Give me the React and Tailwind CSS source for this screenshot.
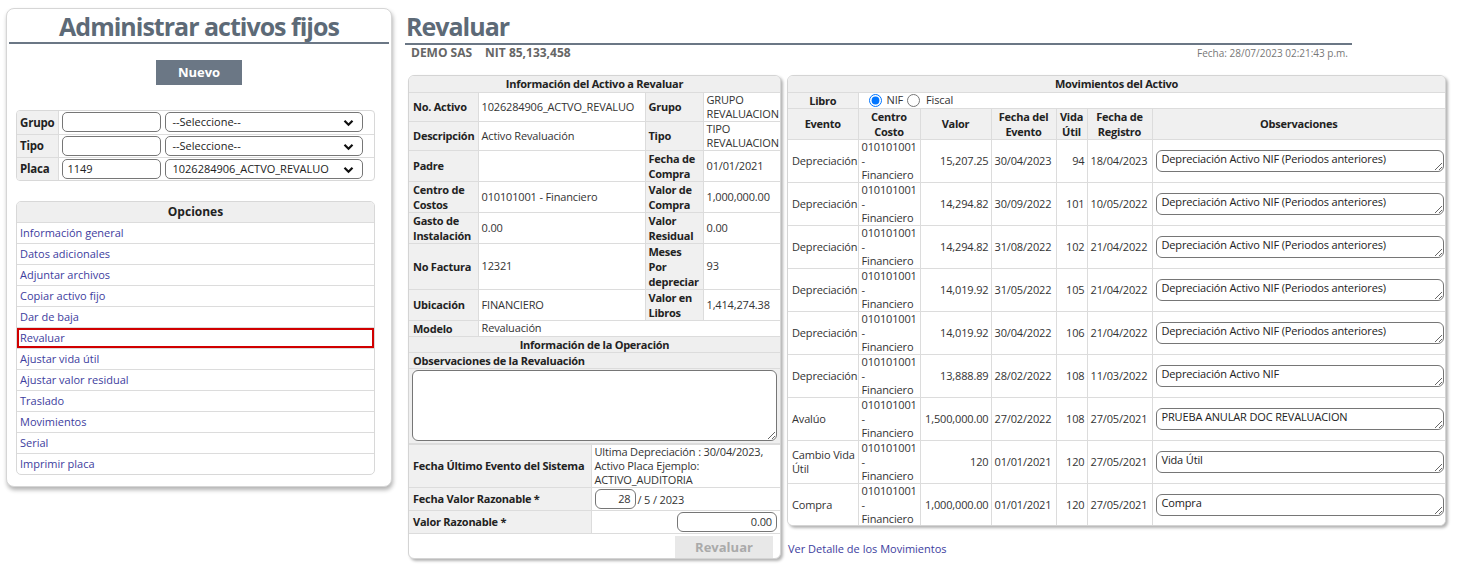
import React from 'react';

const opciones = [
  'Información general',
  'Datos adicionales',
  'Adjuntar archivos',
  'Copiar activo fijo',
  'Dar de baja',
  'Revaluar',
  'Ajustar vida útil',
  'Ajustar valor residual',
  'Traslado',
  'Movimientos',
  'Serial',
  'Imprimir placa',
];

const movimientos = [
  { evento: 'Depreciación', valor: '15,207.25', fecha: '30/04/2023', vida: '94', registro: '18/04/2023', obs: 'Depreciación Activo NIF (Periodos anteriores)' },
  { evento: 'Depreciación', valor: '14,294.82', fecha: '30/09/2022', vida: '101', registro: '10/05/2022', obs: 'Depreciación Activo NIF (Periodos anteriores)' },
  { evento: 'Depreciación', valor: '14,294.82', fecha: '31/08/2022', vida: '102', registro: '21/04/2022', obs: 'Depreciación Activo NIF (Periodos anteriores)' },
  { evento: 'Depreciación', valor: '14,019.92', fecha: '31/05/2022', vida: '105', registro: '21/04/2022', obs: 'Depreciación Activo NIF (Periodos anteriores)' },
  { evento: 'Depreciación', valor: '14,019.92', fecha: '30/04/2022', vida: '106', registro: '21/04/2022', obs: 'Depreciación Activo NIF (Periodos anteriores)' },
  { evento: 'Depreciación', valor: '13,888.89', fecha: '28/02/2022', vida: '108', registro: '11/03/2022', obs: 'Depreciación Activo NIF' },
  { evento: 'Avalúo', valor: '1,500,000.00', fecha: '27/02/2022', vida: '108', registro: '27/05/2021', obs: 'PRUEBA ANULAR DOC REVALUACION' },
  { evento: ['Cambio Vida', 'Útil'], valor: '120', fecha: '01/01/2021', vida: '120', registro: '27/05/2021', obs: 'Vida Útil' },
  { evento: 'Compra', valor: '1,000,000.00', fecha: '01/01/2021', vida: '120', registro: '27/05/2021', obs: 'Compra' },
];

const Chevron = () => (
  <svg width="11" height="8" viewBox="0 0 11 8" className="absolute right-[8px] top-[6px] pointer-events-none">
    <path d="M1.5 1.8 L5.5 5.8 L9.5 1.8" fill="none" stroke="#111" strokeWidth="2.2" />
  </svg>
);

const SelectBox = ({ value }) => (
  <div className="relative w-[198px] h-[20px] border border-[#767676] rounded-[5px] bg-white pl-[7px] text-[11px] leading-[18px] text-[#222]">
    {value}
    <Chevron />
  </div>
);

const Lbl = ({ children, className = '' }) => (
  <td className={`bg-[#f0f0f0] border border-[#dcdcdc] font-bold text-[11px] tracking-[-0.25px] leading-[15px] text-[#222] align-middle whitespace-nowrap ${className}`}>
    {children}
  </td>
);

const Val = ({ children, className = '', ...rest }) => (
  <td {...rest} className={`bg-white border border-[#dcdcdc] text-[11px] tracking-[-0.15px] leading-[14px] text-[#333] align-middle whitespace-nowrap ${className}`}>
    {children}
  </td>
);

function LeftPanel() {
  return (
    <div className="w-[386px] h-[479px] border border-[#d6d6d6] rounded-[8px] shadow-[1px_3px_4px_rgba(0,0,0,0.3)] px-[2px] bg-white">
      <h1 className="h-[35px] border-b-[2px] border-[#6b7785] text-center text-[25px] leading-[34px] font-bold text-[#5d6a77] tracking-[-1px]">
        Administrar activos fijos
      </h1>
      <button className="block mx-auto mt-[16px] w-[86px] h-[25px] bg-[#6b7785] text-white font-bold text-[13px]">
        Nuevo
      </button>

      <div className="ml-[7px] mt-[25px] w-[359px] border border-[#d8d8d8] rounded-[4px] overflow-hidden">
        <table className="w-full border-collapse table-fixed">
          <colgroup>
            <col className="w-[41px]" />
            <col />
          </colgroup>
          <tbody>
            {[
              ['Grupo', '', '--Seleccione--'],
              ['Tipo', '', '--Seleccione--'],
              ['Placa', '1149', '1026284906_ACTVO_REVALUO'],
            ].map(([label, text, sel], i) => (
              <tr key={label} className={`h-[23px] ${i > 0 ? 'border-t border-[#dcdcdc]' : ''}`}>
                <td className="bg-[#f0f0f0] border-r border-[#dcdcdc] pl-[3px] font-bold text-[11.5px] tracking-[-0.2px] text-[#222]">{label}</td>
                <td className="pl-[3px]">
                  <div className="flex gap-[4px]">
                    <div className="w-[99px] h-[20px] border border-[#767676] rounded-[5px] pl-[5px] text-[11px] leading-[18px] text-[#222]">{text}</div>
                    <SelectBox value={sel} />
                  </div>
                </td>
              </tr>
            ))}
          </tbody>
        </table>
      </div>

      <div className="ml-[7px] mt-[20px] w-[359px] border border-[#d8d8d8] rounded-[5px] overflow-hidden">
        <div className="h-[20px] bg-[#efefef] text-center font-bold text-[12px] leading-[20px] text-[#222]">Opciones</div>
        {opciones.map((o) => (
          <div
            key={o}
            className={`h-[21px] border-t border-[#dcdcdc] pl-[3px] text-[11px] leading-[20px] text-[#3d3d9e] ${o === 'Revaluar' ? 'ring-2 ring-inset ring-[#d10000]' : ''}`}
          >
            {o}
          </div>
        ))}
      </div>
    </div>
  );
}

function InfoPanel() {
  const head = 'bg-[#efefef] border-[#dcdcdc] font-bold text-[11px] tracking-[-0.25px] leading-[15px] text-[#222]';
  return (
    <div className="w-[373px] h-[484px] border border-[#d4d4d4] rounded-[6px] shadow-[2px_2px_3px_rgba(0,0,0,0.3)] overflow-hidden bg-white">
      <table className="w-full border-collapse table-fixed">
        <colgroup>
          <col className="w-[69px]" />
          <col className="w-[167px]" />
          <col className="w-[58px]" />
          <col />
        </colgroup>
        <tbody>
          <tr className="h-[16px]">
            <td colSpan={4} className={`${head} border-b text-center`}>
              Información del Activo a Revaluar
            </td>
          </tr>
          <tr className="h-[28px]">
            <Lbl className="pl-[4px] border-l-0">No. Activo</Lbl>
            <Val className="pl-[3px]">1026284906_ACTVO_REVALUO</Val>
            <Lbl className="pl-[3px]">Grupo</Lbl>
            <Val className="pl-[3px] border-r-0 tracking-[-0.4px]">GRUPO<br />REVALUACION</Val>
          </tr>
          <tr className="h-[29px]">
            <Lbl className="pl-[4px] border-l-0">Descripción</Lbl>
            <Val className="pl-[3px]">Activo Revaluación</Val>
            <Lbl className="pl-[3px]">Tipo</Lbl>
            <Val className="pl-[3px] border-r-0 tracking-[-0.4px]">TIPO<br />REVALUACION</Val>
          </tr>
          <tr className="h-[31px]">
            <Lbl className="pl-[4px] border-l-0">Padre</Lbl>
            <Val className="pl-[3px]"></Val>
            <Lbl className="pl-[3px]">Fecha de<br />Compra</Lbl>
            <Val className="pl-[3px] border-r-0">01/01/2021</Val>
          </tr>
          <tr className="h-[31px]">
            <Lbl className="pl-[4px] border-l-0">Centro de<br />Costos</Lbl>
            <Val className="pl-[3px]">010101001 - Financiero</Val>
            <Lbl className="pl-[3px]">Valor de<br />Compra</Lbl>
            <Val className="pl-[3px] border-r-0">1,000,000.00</Val>
          </tr>
          <tr className="h-[31px]">
            <Lbl className="pl-[4px] border-l-0">Gasto de<br />Instalación</Lbl>
            <Val className="pl-[3px]">0.00</Val>
            <Lbl className="pl-[3px]">Valor<br />Residual</Lbl>
            <Val className="pl-[3px] border-r-0">0.00</Val>
          </tr>
          <tr className="h-[46px]">
            <Lbl className="pl-[4px] border-l-0">No Factura</Lbl>
            <Val className="pl-[3px]">12321</Val>
            <Lbl className="pl-[3px]">Meses<br />Por<br />depreciar</Lbl>
            <Val className="pl-[3px] border-r-0">93</Val>
          </tr>
          <tr className="h-[31px]">
            <Lbl className="pl-[4px] border-l-0">Ubicación</Lbl>
            <Val className="pl-[3px]">FINANCIERO</Val>
            <Lbl className="pl-[3px]">Valor en<br />Libros</Lbl>
            <Val className="pl-[3px] border-r-0">1,414,274.38</Val>
          </tr>
          <tr className="h-[16px]">
            <Lbl className="pl-[4px] border-l-0">Modelo</Lbl>
            <Val colSpan={3} className="pl-[3px] border-r-0">Revaluación</Val>
          </tr>
          <tr className="h-[16px]">
            <td colSpan={4} className={`${head} border border-x-0 text-center`}>
              Información de la Operación
            </td>
          </tr>
          <tr className="h-[16px]">
            <td colSpan={4} className={`${head} border border-x-0 pl-[4px]`}>
              Observaciones de la Revaluación
            </td>
          </tr>
          <tr className="h-[75px]">
            <td colSpan={4} className="bg-[#efefef] px-[3px] py-[1px] border-b border-[#dcdcdc]">
              <textarea className="block w-full h-[71px] border border-[#767676] rounded-[6px] bg-white text-[11px] resize-y" />
            </td>
          </tr>
        </tbody>
      </table>
      <table className="w-full border-collapse table-fixed">
        <colgroup>
          <col className="w-[182px]" />
          <col />
        </colgroup>
        <tbody>
          <tr className="h-[43px]">
            <Lbl className="pl-[4px] border-l-0">Fecha Último Evento del Sistema</Lbl>
            <Val className="pl-[3px] border-r-0">
              Ultima Depreciación : 30/04/2023,<br />Activo Placa Ejemplo:<br />ACTIVO_AUDITORIA
            </Val>
          </tr>
          <tr className="h-[23px]">
            <Lbl className="pl-[4px] border-l-0">Fecha Valor Razonable *</Lbl>
            <Val className="pl-[3px] border-r-0">
              <div className="flex items-center">
                <div className="w-[41px] h-[20px] border border-[#767676] rounded-[6px] text-right pr-[4px] leading-[18px]">28</div>
                <span className="ml-[2px] mt-[3px]">/ 5 / 2023</span>
              </div>
            </Val>
          </tr>
          <tr className="h-[23px]">
            <Lbl className="pl-[4px] border-l-0">Valor Razonable *</Lbl>
            <Val className="pr-[3px] border-r-0">
              <div className="ml-auto w-[100px] h-[20px] border border-[#767676] rounded-[6px] text-right pr-[4px] leading-[18px]">0.00</div>
            </Val>
          </tr>
          <tr className="h-[28px]">
            <td colSpan={2} className="border-t border-[#dcdcdc] pr-[7px]">
              <div className="ml-auto w-[98px] h-[23px] bg-[#e8e8e8] text-[#aaaaaa] font-bold text-[13px] leading-[23px] text-center">
                Revaluar
              </div>
            </td>
          </tr>
        </tbody>
      </table>
    </div>
  );
}

function MovPanel() {
  const th = 'bg-[#f0f0f0] border border-[#dcdcdc] font-bold text-[11px] tracking-[-0.25px] leading-[15px] text-[#222] text-center align-middle whitespace-nowrap';
  const td = 'bg-white border border-[#dcdcdc] text-[11px] tracking-[-0.15px] leading-[14px] text-[#333] align-middle whitespace-nowrap';
  return (
    <div className="flex flex-col">
      <div className="w-[659px] h-[451px] border border-[#d4d4d4] rounded-[6px] shadow-[2px_2px_3px_rgba(0,0,0,0.3)] overflow-hidden bg-white">
        <table className="w-full border-collapse table-fixed">
          <colgroup>
            <col className="w-[70px]" />
            <col className="w-[62px]" />
            <col className="w-[71px]" />
            <col className="w-[65px]" />
            <col className="w-[31px]" />
            <col className="w-[65px]" />
            <col />
          </colgroup>
          <tbody>
            <tr className="h-[16px]">
              <td colSpan={7} className="bg-[#efefef] border-b border-[#dcdcdc] text-center font-bold text-[11px] tracking-[-0.25px] leading-[15px] text-[#222]">
                Movimientos del Activo
              </td>
            </tr>
            <tr className="h-[16px]">
              <td className={`${th} border-l-0`}>Libro</td>
              <td colSpan={6} className={`${td} border-r-0 pl-[10px]`}>
                <div className="flex items-center">
                  <input type="radio" name="libro" defaultChecked className="w-[13px] h-[13px] m-0 accent-[#0075ff]" />
                  <span className="ml-[5px]">NIF</span>
                  <input type="radio" name="libro" className="ml-[4px] w-[13px] h-[13px] m-0" />
                  <span className="ml-[6px]">Fiscal</span>
                </div>
              </td>
            </tr>
            <tr className="h-[30px]">
              <td className={`${th} border-l-0`}>Evento</td>
              <td className={th}>Centro<br />Costo</td>
              <td className={th}>Valor</td>
              <td className={th}>Fecha del<br />Evento</td>
              <td className={th}>Vida<br />Útil</td>
              <td className={th}>Fecha de<br />Registro</td>
              <td className={`${th} border-r-0`}>Observaciones</td>
            </tr>
            {movimientos.map((m, i) => (
              <tr key={i} className="h-[43px]">
                <td className={`${td} border-l-0 pl-[4px]`}>
                  {Array.isArray(m.evento) ? (<>{m.evento[0]}<br />{m.evento[1]}</>) : m.evento}
                </td>
                <td className={`${td} pl-[3px]`}>010101001<br />-<br />Financiero</td>
                <td className={`${td} text-right pr-[2px]`}>{m.valor}</td>
                <td className={`${td} pl-[3px]`}>{m.fecha}</td>
                <td className={`${td} text-right pr-[2px]`}>{m.vida}</td>
                <td className={`${td} pl-[3px]`}>{m.registro}</td>
                <td className={`${td} border-r-0 pl-[3px] pr-[3px]`}>
                  <textarea
                    readOnly
                    value={m.obs}
                    className="block w-[288px] h-[22px] border border-[#767676] rounded-[6px] px-[5px] pt-[1px] text-[11px] tracking-[-0.15px] leading-[14px] text-[#222] resize-y overflow-hidden"
                  />
                </td>
              </tr>
            ))}
          </tbody>
        </table>
      </div>
      <a className="mt-[15px] ml-[1px] text-[11px] leading-[15px] text-[#3d3d9e]">Ver Detalle de los Movimientos</a>
    </div>
  );
}

export default function App() {
  return (
    <div className="w-[1465px] h-[579px] bg-white overflow-hidden font-['Open_Sans',sans-serif] text-[11px] text-[#333]">
      <div className="flex items-start pl-[6px] pt-[8px]">
        <LeftPanel />
        <div className="ml-[13px] pt-[1px]">
          <div className="w-[947px]">
            <h1 className="h-[36px] border-b-[2px] border-[#6b7785] text-[25px] leading-[34px] font-bold text-[#5d6a77] tracking-[-1px] pl-[1px]">
              Revaluar
            </h1>
            <div className="flex items-start h-[16px] pl-[6px] pr-[4px]">
              <span className="font-bold text-[12px] leading-[16px] text-[#666]">DEMO SAS</span>
              <span className="ml-[13px] font-bold text-[12px] leading-[16px] text-[#666]">NIT 85,133,458</span>
              <span className="ml-auto text-[10px] leading-[16px] text-[#777]">Fecha: 28/07/2023 02:21:43 p.m.</span>
            </div>
          </div>
          <div className="flex items-start gap-[6px] ml-[3px] mt-[14px]">
            <InfoPanel />
            <MovPanel />
          </div>
        </div>
      </div>
    </div>
  );
}
